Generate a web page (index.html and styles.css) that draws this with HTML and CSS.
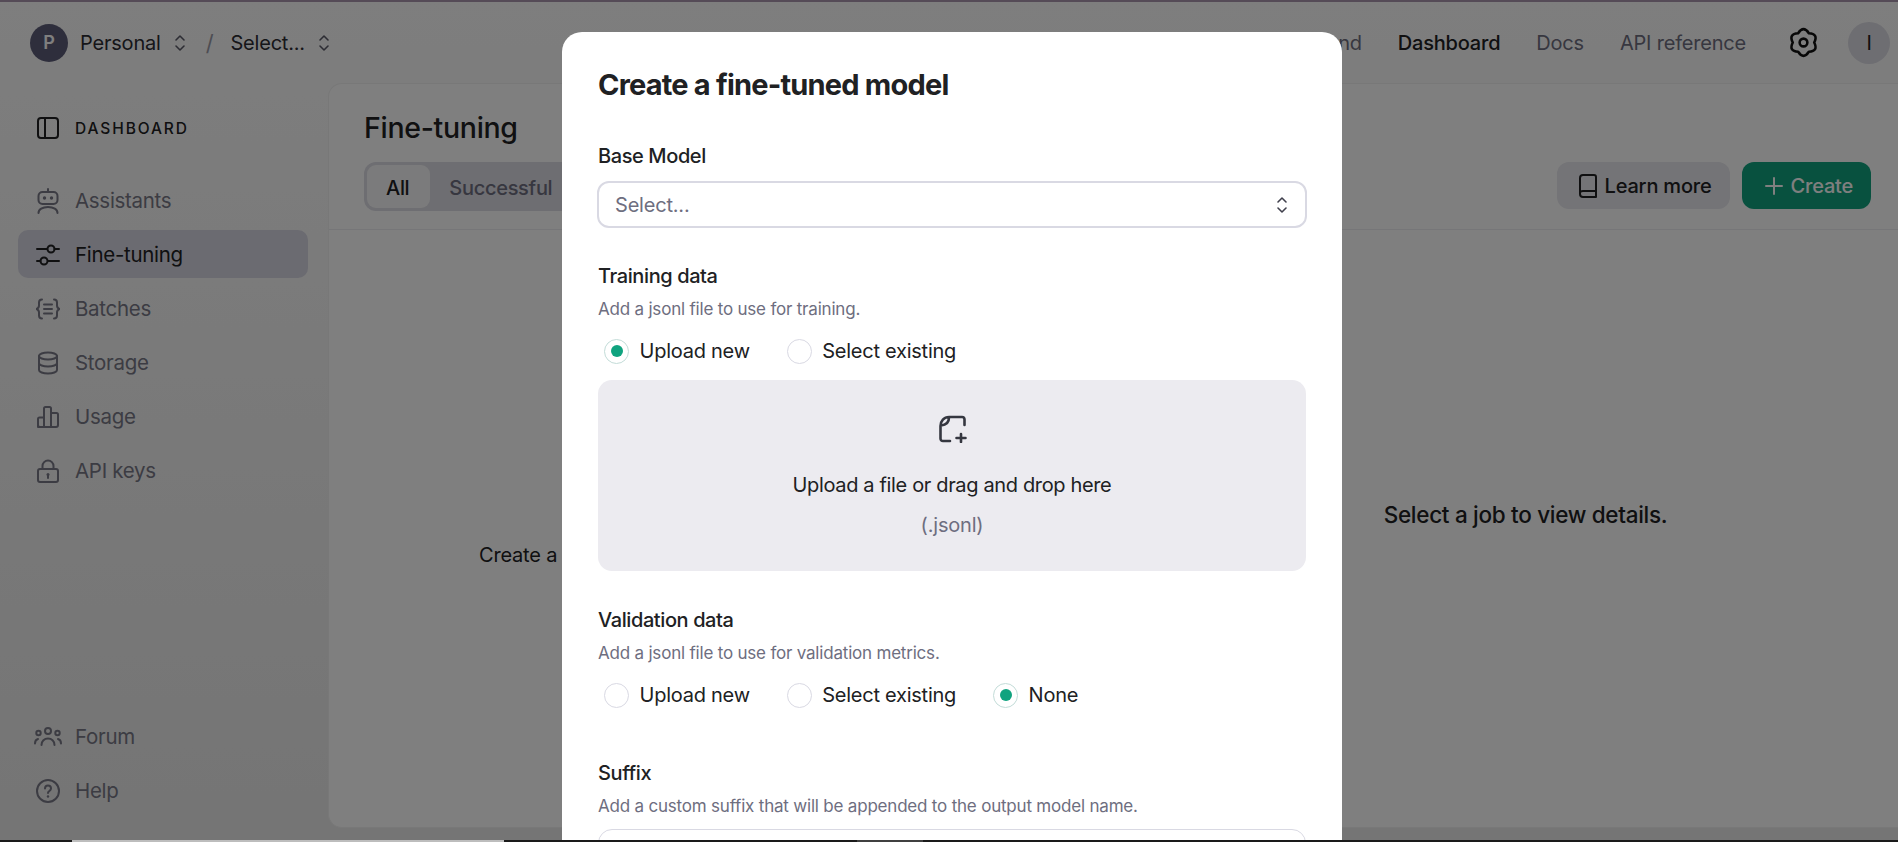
FILE: index.html
```html
<!DOCTYPE html>
<html>

<head>
    <meta charset="UTF-8">
    <title>Fine-tuning</title>
    <link rel="stylesheet" href="styles.css">
</head>

<body>
    <div class="top-strip"></div>

    <div class="app">
        <header class="topbar">
            <div class="crumbs">
                <span class="org-avatar">P</span>
                <span class="crumb">Personal</span>
                <svg class="updown" viewBox="0 0 12 20"><path d="M2 7l4-4 4 4M2 13l4 4 4-4"/></svg>
                <span class="crumb-slash">/</span>
                <span class="crumb">Select...</span>
                <svg class="updown" viewBox="0 0 12 20"><path d="M2 7l4-4 4 4M2 13l4 4 4-4"/></svg>
            </div>
            <nav class="topnav">
                <a class="topnav-link">Playground</a>
                <a class="topnav-link current">Dashboard</a>
                <a class="topnav-link">Docs</a>
                <a class="topnav-link">API reference</a>
                <svg class="gear" viewBox="0 0 24 24">
                    <path d="M7.850 4.810Q12 -1.500 16.150 4.810Q23.690 5.250 20.300 12Q23.690 18.750 16.150 19.190Q12 25.500 7.850 19.190Q.31 18.750 3.700 12Q.31 5.250 7.850 4.810Z"/>
                    <circle cx="12" cy="12" r="3"/>
                </svg>
                <span class="user-avatar">I</span>
            </nav>
        </header>

        <div class="columns">
            <aside class="sidebar">
                <div class="sidebar-title">
                    <svg class="icon" viewBox="0 0 24 24"><rect x="2" y="2" width="20" height="20" rx="3"/><path d="M9 2v20"/></svg>
                    <span>DASHBOARD</span>
                </div>
                <ul class="nav-list">
                    <li class="nav-item">
                        <svg class="icon icon-tall" viewBox="0 0 24 26"><path d="M12 1v3"/><rect x="2.500" y="4" width="19" height="12" rx="4"/><path d="M2.500 25c0-3.500 4-6 9.500-6s9.500 2.500 9.500 6"/><circle class="solid" cx="8.500" cy="10" r="1.700"/><circle class="solid" cx="15.500" cy="10" r="1.700"/></svg>
                        Assistants
                    </li>
                    <li class="nav-item active">
                        <svg class="icon" viewBox="0 0 24 24"><path d="M1 6h10M18.500 6H23M1 18h3.500M12 18h11"/><circle cx="15" cy="6" r="3.500"/><circle cx="8" cy="18" r="3.500"/></svg>
                        Fine-tuning
                    </li>
                    <li class="nav-item">
                        <svg class="icon" viewBox="0 0 24 24"><path d="M6 2.500c-2 0-3 1-3 3v3c0 2-1 3-2.500 3.500C2 12.500 3 13.500 3 15.500v3c0 2 1 3 3 3M18 2.500c2 0 3 1 3 3v3c0 2 1 3 2.500 3.500-1.500.5-2.500 1.500-2.500 3.500v3c0 2-1 3-3 3M8 7.500h8M8 12h8M8 16.500h8"/></svg>
                        Batches
                    </li>
                    <li class="nav-item">
                        <svg class="icon" viewBox="0 0 24 24"><ellipse cx="12" cy="5" rx="9" ry="3.500"/><path d="M3 5v14c0 2 4 3.500 9 3.500s9-1.500 9-3.500V5M3 12c0 2 4 3.500 9 3.500s9-1.500 9-3.500"/></svg>
                        Storage
                    </li>
                    <li class="nav-item">
                        <svg class="icon" viewBox="0 0 24 24"><path d="M2 22v-8c0-1 .5-1.500 1.500-1.500H8M8 22V3.500C8 2.500 8.500 2 9.500 2h4c1 0 1.500.5 1.500 1.500V22M15 8h5.500c1 0 1.500.5 1.500 1.500V20c0 1.500-.5 2-2 2H4c-1.500 0-2-.5-2-2"/></svg>
                        Usage
                    </li>
                    <li class="nav-item">
                        <svg class="icon" viewBox="0 0 24 24"><rect x="2" y="10" width="20" height="13" rx="2"/><path d="M6.500 10V7a5.500 5.500 0 0 1 11 0v3"/><circle class="solid" cx="12" cy="15.500" r="1.500"/><path d="M12 16v3"/></svg>
                        API keys
                    </li>
                </ul>
                <ul class="nav-list nav-bottom">
                    <li class="nav-item">
                        <svg class="icon icon-wide" viewBox="0 0 28 24"><circle cx="14" cy="6" r="3"/><circle cx="4.500" cy="8" r="2.200"/><circle cx="23.500" cy="8" r="2.200"/><path d="M7.500 20c0-4 3-6.500 6.500-6.500s6.500 2.500 6.500 6.500M1 18.500c0-2.500 1-4 3-4.500M27 18.500c0-2.500-1-4-3-4.500"/></svg>
                        Forum
                    </li>
                    <li class="nav-item">
                        <svg class="icon" viewBox="0 0 24 24"><circle cx="12" cy="12" r="11"/><path d="M9 9.500c0-4 6-4 6 0 0 2.500-3 2.500-3 4.500"/><circle class="solid" cx="12" cy="17.500" r="1.200"/></svg>
                        Help
                    </li>
                </ul>
            </aside>

            <main class="panel">
                <div class="panel-head">
                    <div>
                        <h1 class="panel-title">Fine-tuning</h1>
                        <div class="tabs">
                            <span class="tab selected">All</span>
                            <span class="tab">Successful</span>
                        </div>
                    </div>
                    <div class="panel-actions">
                        <button class="btn btn-plain">
                            <svg class="btn-icon" viewBox="0 0 22 26"><path d="M3 21V5c0-2 1-3 3-3h11c1 0 2 1 2 2v20H6c-2 0-3-1-3-3zM3 20c0-1 1-2 3-2h13"/></svg>
                            Learn more
                        </button>
                        <button class="btn btn-green">
                            <svg class="btn-icon" viewBox="0 0 22 26"><path d="M11 5v16M3 13h16"/></svg>
                            Create
                        </button>
                    </div>
                </div>
                <div class="panel-body">
                    <div class="job-list">
                        <p>Create a fine-tuning job to get started.</p>
                    </div>
                    <div class="job-detail">
                        <p>Select a job to view details.</p>
                    </div>
                </div>
            </main>
        </div>

        <div class="overlay"></div>

        <div class="modal">
            <h2 class="modal-title">Create a fine-tuned model</h2>

            <section class="field field-base">
                <label class="field-label">Base Model</label>
                <div class="select-box">
                    <span>Select...</span>
                    <svg class="updown" viewBox="0 0 12 20"><path d="M2 7l4-4 4 4M2 13l4 4 4-4"/></svg>
                </div>
            </section>

            <section class="field field-training">
                <label class="field-label">Training data</label>
                <p class="field-help">Add a jsonl file to use for training.</p>
                <div class="radio-row">
                    <span class="radio on"></span><span class="radio-text">Upload new</span>
                    <span class="radio"></span><span class="radio-text">Select existing</span>
                </div>
                <div class="dropzone">
                    <svg class="file-plus" viewBox="0 0 29 28"><path d="M12 26H5c-1.500 0-2.500-1-2.500-2.500V11C2.500 6 6 2 11 2h13c1.500 0 2.500 1 2.500 2.500V10M11 2.500c0 4.500-3 7.500-8 8M23 19v8M18.500 23h9"/></svg>
                    <p class="drop-main">Upload a file or drag and drop here</p>
                    <p class="drop-sub">(.jsonl)</p>
                </div>
            </section>

            <section class="field field-validation">
                <label class="field-label">Validation data</label>
                <p class="field-help">Add a jsonl file to use for validation metrics.</p>
                <div class="radio-row">
                    <span class="radio"></span><span class="radio-text">Upload new</span>
                    <span class="radio"></span><span class="radio-text">Select existing</span>
                    <span class="radio on"></span><span class="radio-text">None</span>
                </div>
            </section>

            <section class="field field-suffix">
                <label class="field-label">Suffix</label>
                <p class="field-help">Add a custom suffix that will be appended to the output model name.</p>
                <div class="text-box"></div>
            </section>
        </div>
    </div>

    <div class="taskbar">
        <span class="task task-light"></span>
        <span class="task task-grey"></span>
    </div>
</body>

</html>
```

FILE: styles.css
```css
* {
    box-sizing: border-box;
}

html,
body {
    height: 100%;
}

body {
    margin: 0;
    overflow: hidden;
    display: flex;
    flex-direction: column;
    font-family: 'Inter', sans-serif;
    font-size: 20px;
    letter-spacing: -0.2px;
    color: #202123;
    background-color: #1a1a1a;
}

p,
h1,
h2,
ul {
    margin: 0;
    padding: 0;
}

ul {
    list-style-type: none;
}

svg {
    fill: none;
    stroke: currentColor;
    stroke-width: 2;
    stroke-linecap: round;
    stroke-linejoin: round;
    flex-shrink: 0;
}

svg .solid {
    fill: currentColor;
    stroke: none;
}

.top-strip {
    height: 2px;
    background-color: #554b57;
    flex-shrink: 0;
}

.app {
    position: relative;
    flex: 1;
    min-height: 0;
    display: flex;
    flex-direction: column;
    overflow: hidden;
    background: linear-gradient(to bottom, #fcfcfc, #eaeaea);
}

.taskbar {
    height: 2px;
    flex-shrink: 0;
    display: flex;
    padding-left: 72px;
}

.task-light {
    width: 432px;
    background-color: #bdbdbd;
}

.task-grey {
    width: 66px;
    margin-left: 353px;
    background-color: #404040;
}

/* top bar */

.topbar {
    height: 81px;
    flex-shrink: 0;
    display: flex;
    align-items: center;
    justify-content: space-between;
    padding: 0 8px 0 30px;
}

.crumbs {
    display: flex;
    align-items: center;
}

.org-avatar {
    width: 38px;
    height: 38px;
    border-radius: 50%;
    background-color: #5c5c78;
    color: #ffffff;
    font-size: 18px;
    font-weight: 600;
    display: flex;
    align-items: center;
    justify-content: center;
    margin-right: 12px;
}

.crumb {
    color: #2d2d33;
}

.updown {
    width: 12px;
    height: 20px;
    stroke-width: 1.6;
    color: #5a5a68;
    margin-left: 13px;
}

.crumb-slash {
    color: #9a9aa6;
    font-size: 22px;
    margin: 0 17px 0 20px;
}

.topnav {
    display: flex;
    align-items: center;
}

.topnav-link {
    color: #6e6e80;
    margin-right: 36px;
    padding-top: 1px;
}

.topnav-link.current {
    color: #202123;
    font-weight: 500;
}

.gear {
    width: 31px;
    height: 31px;
    color: #111111;
    margin-left: 6px;
}

.user-avatar {
    width: 42px;
    height: 42px;
    border-radius: 50%;
    background-color: #dcdce4;
    margin-left: 29px;
    display: flex;
    align-items: center;
    justify-content: center;
}

/* sidebar */

.columns {
    flex: 1;
    min-height: 0;
    display: flex;
}

.sidebar {
    width: 328px;
    flex-shrink: 0;
    display: flex;
    flex-direction: column;
    padding: 0 20px 26px 18px;
}

.sidebar-title {
    display: flex;
    align-items: center;
    gap: 15px;
    height: 24px;
    margin: 33px 0 36px;
    padding-left: 18px;
    font-size: 15.5px;
    font-weight: 500;
    letter-spacing: 1.9px;
    color: #202123;
}

.icon {
    width: 24px;
    height: 24px;
}

.icon-tall {
    height: 26px;
}

.icon-wide {
    width: 30px;
    margin: 0 -3px;
}

.nav-list {
    display: flex;
    flex-direction: column;
    gap: 6px;
}

.nav-bottom {
    margin-top: auto;
}

.nav-item {
    height: 48px;
    display: flex;
    align-items: center;
    gap: 15px;
    padding: 1px 0 0 18px;
    border-radius: 10px;
    font-size: 20.5px;
    letter-spacing: -0.3px;
    color: #787886;
}

.nav-item.active {
    background-color: #d6d6e2;
    color: #202123;
}

/* main panel */

.panel {
    flex: 1;
    min-width: 0;
    display: flex;
    flex-direction: column;
    margin-bottom: 12px;
    background-color: #ffffff;
    border: 1px solid #f0f0f0;
    border-right: none;
    border-radius: 14px 0 0 14px;
}

.panel-head {
    display: flex;
    justify-content: space-between;
    align-items: flex-end;
    padding: 25px 27px 18px 35px;
    border-bottom: 1px solid #ececf1;
}

.panel-title {
    font-size: 28.5px;
    font-weight: 500;
    line-height: 38px;
    letter-spacing: -0.3px;
    margin-bottom: 15px;
}

.tabs {
    display: flex;
    width: 400px;
    height: 49px;
    padding: 3px;
    background-color: #dcdce4;
    border-radius: 12px;
}

.tab {
    display: flex;
    align-items: center;
    padding: 2px 19px 0;
    color: #6e6e80;
    font-weight: 500;
    letter-spacing: -0.3px;
    border-radius: 9px;
}

.tab.selected {
    padding-right: 21px;
    background-color: #f7f7f8;
    color: #202123;
}

.panel-actions {
    display: flex;
    gap: 12px;
    padding-bottom: 2px;
}

.btn {
    height: 47px;
    display: flex;
    align-items: center;
    gap: 6px;
    padding: 1px 18px 0 20px;
    border: none;
    border-radius: 12px;
    font-family: inherit;
    font-size: 20px;
    font-weight: 500;
    letter-spacing: -0.2px;
}

.btn-plain {
    background-color: #e8e8ee;
    color: #202123;
}

.btn-green {
    padding-left: 21px;
    background-color: #10a37f;
    color: #ffffff;
}

.btn-icon {
    width: 22px;
    height: 26px;
}

.panel-body {
    flex: 1;
    display: flex;
}

.job-list {
    width: 824px;
    padding: 313px 0 0 150px;
    white-space: nowrap;
}

.job-detail {
    flex: 1;
    text-align: center;
    padding-top: 271px;
    font-size: 22.5px;
    font-weight: 500;
    letter-spacing: -0.3px;
}

/* modal over the dimmed page */

.overlay {
    position: absolute;
    inset: 0;
    background-color: rgba(0, 0, 0, 0.5);
}

.modal {
    position: absolute;
    left: 562px;
    top: 30px;
    bottom: 0;
    width: 780px;
    padding: 0 36px;
    overflow: hidden;
    background-color: #ffffff;
    border-radius: 20px 20px 0 0;
}

.modal-title {
    font-size: 29px;
    font-weight: 700;
    line-height: 40px;
    letter-spacing: -0.8px;
    margin-top: 33px;
    color: #202123;
}

.field-label {
    display: block;
    font-size: 20px;
    font-weight: 500;
    line-height: 28px;
    letter-spacing: -0.4px;
}

.field-base {
    margin-top: 37px;
}

.field-training {
    margin-top: 34px;
}

.field-validation {
    margin-top: 35px;
}

.field-suffix {
    margin-top: 51px;
}

.select-box {
    height: 47px;
    margin: 11px -1px 0;
    display: flex;
    align-items: center;
    justify-content: space-between;
    padding: 0 17px 0 16px;
    border: 2px solid #d9d9e3;
    border-radius: 12px;
    color: #6e6e80;
}

.select-box .updown {
    color: #40404c;
}

.field-help {
    font-size: 17px;
    line-height: 22px;
    margin-top: 8px;
    letter-spacing: -0.2px;
    color: #6e6e80;
}

.radio-row {
    display: flex;
    align-items: center;
    height: 26px;
    margin-top: 18px;
    padding-left: 6px;
}

.radio {
    width: 25px;
    height: 25px;
    border-radius: 50%;
    border: 1.5px solid #d9d9e3;
    flex-shrink: 0;
    display: flex;
    align-items: center;
    justify-content: center;
}

.radio.on {
    border-color: #c3dcd8;
}

.radio.on::after {
    content: "";
    width: 12px;
    height: 12px;
    border-radius: 50%;
    background-color: #10a37f;
}

.radio-text {
    margin: 0 37px 0 10.5px;
    letter-spacing: -0.25px;
}

.dropzone {
    height: 191px;
    margin-top: 16px;
    display: flex;
    flex-direction: column;
    align-items: center;
    padding-top: 35px;
    background-color: #ecebf0;
    border-radius: 14px;
}

.file-plus {
    width: 29px;
    height: 28px;
    stroke-width: 2.6;
    color: #353740;
}

.drop-main {
    line-height: 26px;
    margin-top: 29px;
    letter-spacing: -0.35px;
}

.drop-sub {
    line-height: 26px;
    margin-top: 14px;
    color: #6e6e80;
}

.text-box {
    height: 47px;
    margin-top: 12px;
    border: 1.5px solid #d9d9e3;
    border-radius: 14px;
}
```
